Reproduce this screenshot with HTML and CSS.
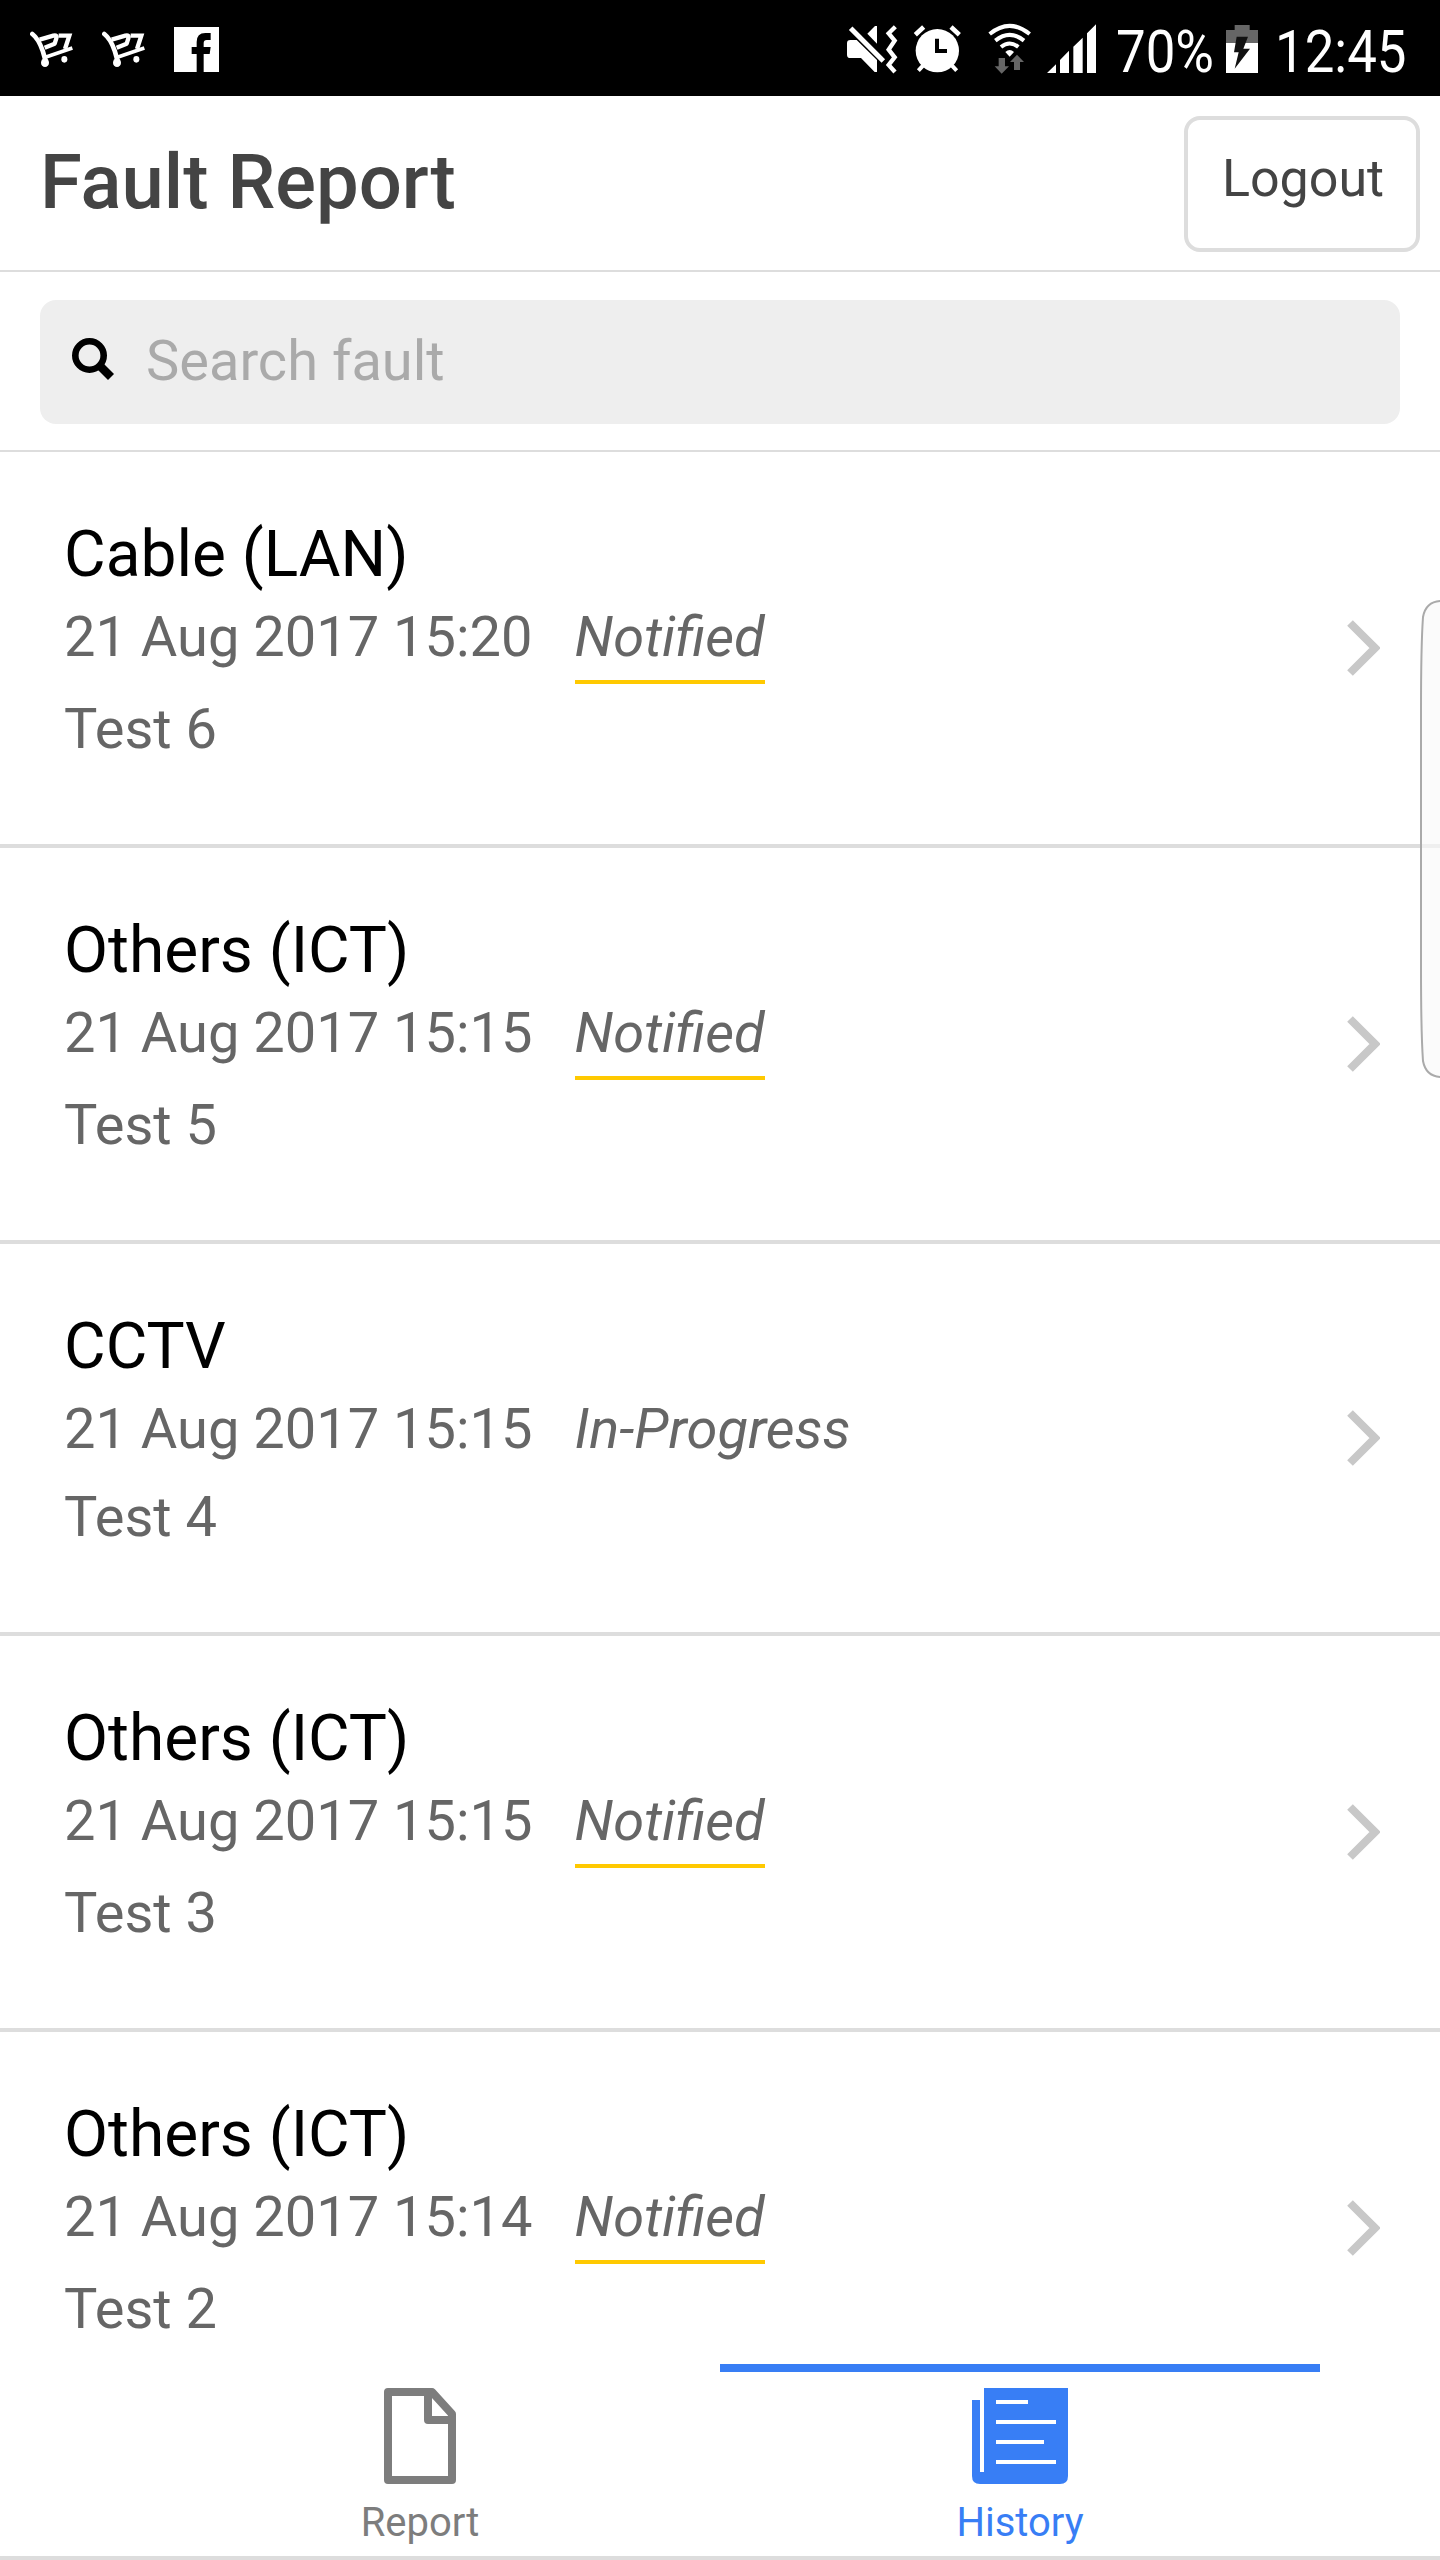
FILE: index.html
```
<!DOCTYPE html>
<html lang="en">
<head>
    <meta charset="UTF-8">
    <meta name="viewport" content="width=device-width, initial-scale=1.0">
    <title>Fault Report</title>
    <link rel="stylesheet" href="styles.css">
</head>
<body>
    <svg class="defs" aria-hidden="true">
        <symbol id="cart" viewBox="90 93 129 111">
            <g fill="none" stroke="#fff" stroke-width="14" stroke-linejoin="round">
                <path d="M97 102C110 112 121 132 128 152L136 180" stroke-linecap="round"/>
                <path d="M119 119L160 107Q173 104 169 115L164 131L134 143" stroke-width="13"/>
                <path d="M176 107H208L195 147" stroke-width="13" stroke-linejoin="miter"/>
                <path d="M136 172L217 144" stroke-width="11"/>
            </g>
            <ellipse cx="135" cy="188" rx="12" ry="13" fill="#fff"/>
            <ellipse cx="193" cy="178" rx="9" ry="10" fill="#fff"/>
        </symbol>
        <symbol id="chevron" viewBox="0 0 33 58">
            <path d="M3 4L28 29L3 54" fill="none" stroke="#c8c8c8" stroke-width="8"/>
        </symbol>
    </svg>

    <div class="screen">
        <!-- Status bar -->
        <div class="status-bar">
            <div class="notifications">
                <svg class="icon-cart"><use href="#cart"/></svg>
                <svg class="icon-cart"><use href="#cart"/></svg>
                <svg class="icon-facebook" viewBox="520 81 135 135">
                    <rect x="520" y="81" width="135" height="135" fill="#fff"/>
                    <path d="M588 216V162H573V141H588V126Q588 99 614 99H630V120H618Q609 120 609 129V141H630L627 162H609V216Z" fill="#000"/>
                </svg>
            </div>
            <div class="system">
                <svg class="icon-mute" viewBox="81 72 156 150">
                    <path d="M91 120H110L171 180V216H164L123 174H91Q81 174 81 164V130Q81 120 91 120Z" fill="#fff"/>
                    <path d="M92 85L190 183" stroke="#fff" stroke-width="15"/>
                    <path d="M142 101L165 78H171V131Z" fill="#fff"/>
                    <path d="M226 80L206 100L224 122L206 149L224 172L206 195L225 216" fill="none" stroke="#fff" stroke-width="13"/>
                </svg>
                <svg class="icon-alarm" viewBox="279 72 147 150">
                    <circle cx="352" cy="152" r="65" fill="#fff"/>
                    <path d="M286 104L311 81M393 81L418 104" stroke="#fff" stroke-width="14"/>
                    <path d="M309 197L295 212M396 197L410 212" stroke="#fff" stroke-width="12"/>
                    <path d="M351 116V153H381" fill="none" stroke="#000" stroke-width="12"/>
                </svg>
                <svg class="icon-wifi" viewBox="504 69 129 153">
                    <g fill="none" stroke="#fff" stroke-width="12">
                        <path d="M509 102Q569 53 629 102"/>
                        <path d="M526 122Q569 87 612 122"/>
                        <path d="M543 141Q569 120 595 141"/>
                    </g>
                    <path d="M556 156Q569 144 582 156L569 170Z" fill="#fff"/>
                    <path d="M536 174H555V199H567L545 221L524 199H536Z" fill="#666"/>
                    <path d="M582 210H600V186H612L591 164L570 186H582Z" fill="#666"/>
                </svg>
                <svg class="icon-signal" viewBox="681 72 147 150">
                    <path d="M681 219L708 193V219ZM720 219V180L747 152V219ZM760 219V140L788 113V219ZM801 219V100L828 73V219Z" fill="#fff"/>
                </svg>
                <span class="battery-level">70%</span>
                <svg class="icon-battery" viewBox="378 72 96 150">
                    <path d="M378 90H404V75H449V90H474V130H378Z" fill="#666"/>
                    <rect x="378" y="129" width="96" height="90" fill="#fff"/>
                    <path d="M410 110H444L430 146H450L404 206L416 157H402Z" fill="#111"/>
                </svg>
                <span class="clock">12:45</span>
            </div>
        </div>

        <!-- Header -->
        <header class="header">
            <h1 class="title">Fault Report</h1>
            <button class="logout">Logout</button>
        </header>

        <!-- Search -->
        <div class="search-bar">
            <label class="search-box">
                <svg class="icon-search" viewBox="0 0 42 42">
                    <circle cx="17.5" cy="17.5" r="14.2" fill="none" stroke="#000" stroke-width="6.6"/>
                    <path d="M27 27L39 39" stroke="#000" stroke-width="8.5"/>
                </svg>
                <input class="search-input" type="text" placeholder="Search fault">
            </label>
        </div>

        <!-- Fault list -->
        <main class="list">
            <div class="item">
                <div class="item-body">
                    <h2 class="item-title">Cable (LAN)</h2>
                    <div class="item-info"><span class="date">21 Aug 2017 15:20</span><em class="state notified">Notified</em></div>
                    <p class="item-text">Test 6</p>
                </div>
                <svg class="icon-chevron"><use href="#chevron"/></svg>
            </div>
            <div class="item">
                <div class="item-body">
                    <h2 class="item-title">Others (ICT)</h2>
                    <div class="item-info"><span class="date">21 Aug 2017 15:15</span><em class="state notified">Notified</em></div>
                    <p class="item-text">Test 5</p>
                </div>
                <svg class="icon-chevron"><use href="#chevron"/></svg>
            </div>
            <div class="item">
                <div class="item-body">
                    <h2 class="item-title">CCTV</h2>
                    <div class="item-info"><span class="date">21 Aug 2017 15:15</span><em class="state">In-Progress</em></div>
                    <p class="item-text">Test 4</p>
                </div>
                <svg class="icon-chevron"><use href="#chevron"/></svg>
            </div>
            <div class="item">
                <div class="item-body">
                    <h2 class="item-title">Others (ICT)</h2>
                    <div class="item-info"><span class="date">21 Aug 2017 15:15</span><em class="state notified">Notified</em></div>
                    <p class="item-text">Test 3</p>
                </div>
                <svg class="icon-chevron"><use href="#chevron"/></svg>
            </div>
            <div class="item">
                <div class="item-body">
                    <h2 class="item-title">Others (ICT)</h2>
                    <div class="item-info"><span class="date">21 Aug 2017 15:14</span><em class="state notified">Notified</em></div>
                    <p class="item-text">Test 2</p>
                </div>
                <svg class="icon-chevron"><use href="#chevron"/></svg>
            </div>
        </main>

        <!-- Tabs -->
        <nav class="tabs">
            <a class="tab">
                <svg class="icon-tab" viewBox="0 0 96 96">
                    <path d="M16 4H60L80 26V92H16Z" fill="none" stroke="#7d7d7d" stroke-width="8" stroke-linejoin="round"/>
                    <path d="M56 4V32H80" fill="none" stroke="#7d7d7d" stroke-width="8" stroke-linejoin="round"/>
                </svg>
                <span class="tab-label">Report</span>
            </a>
            <a class="tab active">
                <svg class="icon-tab" viewBox="0 0 96 96">
                    <path d="M12 0H96V88Q96 96 88 96H8Q0 96 0 88V12H8V84H12Z" fill="#387ef5"/>
                    <path d="M24 14H56M24 34H84M24 54H72M24 74H84" stroke="#fff" stroke-width="4"/>
                </svg>
                <span class="tab-label">History</span>
            </a>
        </nav>

        <!-- Edge panel handle -->
        <svg class="edge-handle" viewBox="0 0 20 478">
            <path d="M22 1Q6 1 3 17Q1 45 1 110V368Q1 433 3 461Q6 477 22 477" fill="#f9f9f9" fill-opacity="0.65" stroke="#aaa" stroke-width="2"/>
        </svg>
    </div>
</body>
</html>
```
FILE: styles.css
```
/* Base */
* {
    box-sizing: border-box;
}

body {
    margin: 0;
    background: #fff;
    font-family: Roboto, sans-serif;
}

svg {
    display: block;
    flex-shrink: 0;
}

.defs {
    position: absolute;
    width: 0;
    height: 0;
}

.screen {
    position: relative;
    display: flex;
    flex-direction: column;
    width: 1440px;
    height: 2560px;
    overflow: hidden;
}

/* Status bar */
.status-bar {
    display: flex;
    justify-content: space-between;
    flex-shrink: 0;
    height: 96px;
    padding: 0 33px 0 30px;
    background: #000;
    color: #fff;
}

.notifications,
.system {
    display: flex;
    align-items: flex-start;
}

.icon-cart {
    width: 43px;
    height: 37px;
    margin: 31px 29px 0 0;
}

.icon-facebook {
    width: 45px;
    height: 45px;
    margin-top: 27px;
}

.icon-mute {
    width: 52px;
    height: 50px;
    margin: 24px 14px 0 0;
}

.icon-alarm {
    width: 49px;
    height: 50px;
    margin: 24px 26px 0 0;
}

.icon-wifi {
    width: 43px;
    height: 51px;
    margin: 23px 16px 0 0;
}

.icon-signal {
    width: 49px;
    height: 50px;
    margin: 24px 20px 0 0;
}

.icon-battery {
    width: 32px;
    height: 50px;
    margin: 24px 17px 0 0;
}

.battery-level,
.clock {
    font-size: 60px;
    line-height: 103px;
    white-space: nowrap;
    transform: scaleX(0.88);
    transform-origin: left;
}

.battery-level {
    width: 110px;
}

.clock {
    width: 132px;
}

/* Header */
.header {
    display: flex;
    justify-content: space-between;
    flex-shrink: 0;
    height: 176px;
    padding: 0 20px 0 40px;
    border-bottom: 2px solid #ddd;
}

.title {
    margin: 0;
    font-size: 76px;
    font-weight: 500;
    line-height: 172px;
    color: #444;
}

.logout {
    width: 236px;
    height: 136px;
    margin-top: 20px;
    padding: 0 0 10px 2px;
    border: 4px solid #ddd;
    border-radius: 16px;
    background: #fff;
    color: #444;
    font-family: inherit;
    font-size: 52px;
    line-height: 118px;
}

/* Search */
.search-bar {
    flex-shrink: 0;
    height: 180px;
    padding: 28px 40px 26px;
    border-bottom: 2px solid #ddd;
}

.search-box {
    display: flex;
    height: 124px;
    padding-left: 32px;
    border-radius: 16px;
    background: #eee;
}

.icon-search {
    width: 42px;
    height: 42px;
    margin: 38px 32px 0 0;
}

.search-input {
    flex: 1;
    height: 122px;
    padding: 0;
    border: 0;
    outline: 0;
    background: transparent;
    font-family: inherit;
    font-size: 56px;
}

.search-input::placeholder {
    color: #aaa;
}

/* Fault list */
.list {
    flex: 1;
    min-height: 0;
    overflow: hidden;
}

.item {
    display: flex;
    justify-content: space-between;
    align-items: center;
    padding: 61px 60px 70px 64px;
    border-bottom: 4px solid #ddd;
}

.item-title {
    margin: 0 0 -1px;
    font-size: 64px;
    font-weight: 400;
    line-height: 84px;
    color: #000;
}

.item-info {
    display: flex;
    align-items: flex-start;
    font-size: 56px;
    line-height: 82px;
    color: #666;
}

.date {
    margin-right: 42px;
}

.state {
    padding-bottom: 2px;
}

.notified {
    border-bottom: 4px solid #ffc900;
}

.item-text {
    margin: 0;
    font-size: 56px;
    line-height: 90px;
    color: #666;
}

.icon-chevron {
    width: 33px;
    height: 58px;
    margin-top: 9px;
}

/* Tabs */
.tabs {
    display: flex;
    justify-content: center;
    flex-shrink: 0;
    height: 196px;
    border-bottom: 4px solid #ddd;
    background: #fff;
}

.tab {
    display: flex;
    flex-direction: column;
    align-items: center;
    width: 600px;
    padding-top: 16px;
    border-top: 8px solid transparent;
    color: #7d7d7d;
}

.tab.active {
    border-top-color: #387ef5;
    color: #387ef5;
}

.icon-tab {
    width: 96px;
    height: 96px;
}

.tab-label {
    margin-top: 16px;
    font-size: 40px;
    line-height: 46px;
}

/* Edge panel handle, over the list */
.edge-handle {
    position: absolute;
    top: 600px;
    right: 0;
    width: 20px;
    height: 478px;
}
```
